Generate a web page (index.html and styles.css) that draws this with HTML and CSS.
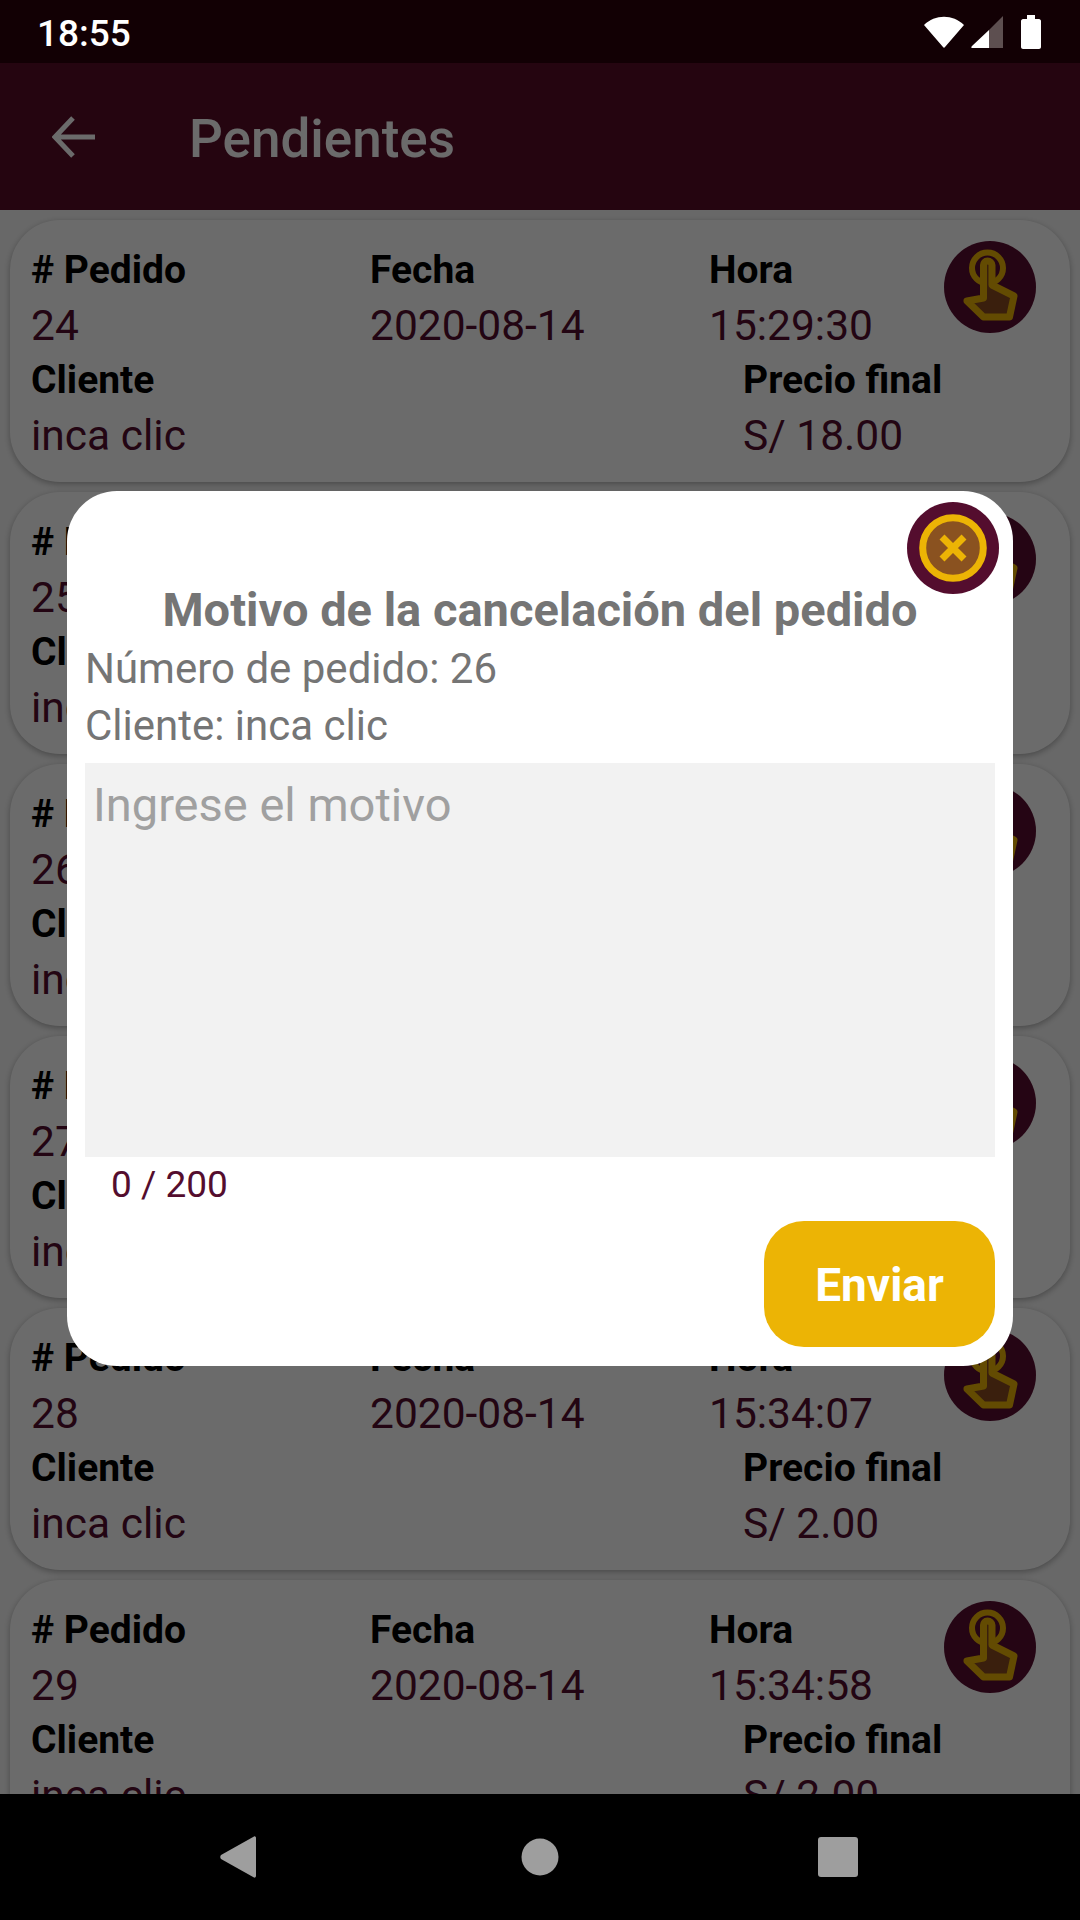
FILE: index.html
```html
<!DOCTYPE html>
<html>
<head>
  <title>Pendientes</title>
  <link rel="stylesheet" href="styles.css">
</head>
<body>
  <svg class="defs" width="0" height="0">
    <symbol id="tap" viewBox="0 0 92 92">
      <circle cx="46" cy="46" r="46" fill="#5a0d30"/>
      <circle cx="43.5" cy="27" r="15.5" fill="none" stroke="#ecb405" stroke-width="6"/>
      <path d="M43.500 20 C41 20 39.500 22 39.500 24 L39.500 57 L23 60 L39.500 76 L65.500 76 L70 55 L48 44 L48 24 C48 22 46 20 43.500 20 Z" fill="#8a4a20" stroke="#ecb405" stroke-width="7" stroke-linejoin="round"/>
    </symbol>
  </svg>

  <div class="screen">
    <div class="status-bar">
      <span class="time">18:55</span>
      <div class="status-icons">
        <svg class="wifi" width="40" height="32" viewBox="0 0 40 32"><path d="M0 9 C11 -2 29 -2 40 9 L21 31 C20.500 32 19.500 32 19 31 Z" fill="#fff"/></svg>
        <svg class="signal" width="32" height="32" viewBox="0 0 32 32">
          <path d="M32 0 V32 H18 V14 Z" fill="#5d4f50"/>
          <path d="M18 14 V32 H1 C0 32 0 31 1 30 Z" fill="#fff"/>
        </svg>
        <svg class="battery" width="20" height="34" viewBox="0 0 20 34"><path d="M6 0 H14 V4 H18 C19 4 20 5 20 6 V32 C20 33 19 34 18 34 H2 C1 34 0 33 0 32 V6 C0 5 1 4 2 4 H6 Z" fill="#fff"/></svg>
      </div>
    </div>

    <div class="app">
      <header class="toolbar">
        <svg class="back" width="44" height="42" viewBox="0 0 44 42"><path d="M43 21 H3 M21 2 L3 21 L21 40" fill="none" stroke="#fff" stroke-width="5"/></svg>
        <h1>Pendientes</h1>
      </header>

      <main class="list">
        <article class="card">
          <div class="cell"><b># Pedido</b><span>24</span></div>
          <div class="cell"><b>Fecha</b><span>2020-08-14</span></div>
          <div class="cell"><b>Hora</b><span>15:29:30</span></div>
          <svg class="tap"><use href="#tap"/></svg>
          <div class="cell wide"><b>Cliente</b><span>inca clic</span></div>
          <div class="cell price"><b>Precio final</b><span>S/ 18.00</span></div>
        </article>
        <article class="card">
          <div class="cell"><b># Pedido</b><span>25</span></div>
          <div class="cell"><b>Fecha</b><span>2020-08-14</span></div>
          <div class="cell"><b>Hora</b><span>15:30:12</span></div>
          <svg class="tap"><use href="#tap"/></svg>
          <div class="cell wide"><b>Cliente</b><span>inca clic</span></div>
          <div class="cell price"><b>Precio final</b><span>S/ 2.00</span></div>
        </article>
        <article class="card">
          <div class="cell"><b># Pedido</b><span>26</span></div>
          <div class="cell"><b>Fecha</b><span>2020-08-14</span></div>
          <div class="cell"><b>Hora</b><span>15:31:40</span></div>
          <svg class="tap"><use href="#tap"/></svg>
          <div class="cell wide"><b>Cliente</b><span>inca clic</span></div>
          <div class="cell price"><b>Precio final</b><span>S/ 2.00</span></div>
        </article>
        <article class="card">
          <div class="cell"><b># Pedido</b><span>27</span></div>
          <div class="cell"><b>Fecha</b><span>2020-08-14</span></div>
          <div class="cell"><b>Hora</b><span>15:33:05</span></div>
          <svg class="tap"><use href="#tap"/></svg>
          <div class="cell wide"><b>Cliente</b><span>inca clic</span></div>
          <div class="cell price"><b>Precio final</b><span>S/ 2.00</span></div>
        </article>
        <article class="card">
          <div class="cell"><b># Pedido</b><span>28</span></div>
          <div class="cell"><b>Fecha</b><span>2020-08-14</span></div>
          <div class="cell"><b>Hora</b><span>15:34:07</span></div>
          <svg class="tap"><use href="#tap"/></svg>
          <div class="cell wide"><b>Cliente</b><span>inca clic</span></div>
          <div class="cell price"><b>Precio final</b><span>S/ 2.00</span></div>
        </article>
        <article class="card">
          <div class="cell"><b># Pedido</b><span>29</span></div>
          <div class="cell"><b>Fecha</b><span>2020-08-14</span></div>
          <div class="cell"><b>Hora</b><span>15:34:58</span></div>
          <svg class="tap"><use href="#tap"/></svg>
          <div class="cell wide"><b>Cliente</b><span>inca clic</span></div>
          <div class="cell price"><b>Precio final</b><span>S/ 2.00</span></div>
        </article>
      </main>

      <div class="overlay">
        <section class="modal">
          <button class="close" type="button" aria-label="Cerrar">
            <svg width="92" height="92" viewBox="0 0 92 92">
              <circle cx="46" cy="46" r="46" fill="#540d2e"/>
              <circle cx="46" cy="46" r="30.300" fill="#8a5220" stroke="#ecb405" stroke-width="7"/>
              <path d="M35 35 L57 57 M57 35 L35 57" stroke="#ecb405" stroke-width="7"/>
            </svg>
          </button>
          <h2>Motivo de la cancelación del pedido</h2>
          <p class="info">Número de pedido: 26</p>
          <p class="info">Cliente: inca clic</p>
          <div class="motivo">Ingrese el motivo</div>
          <p class="counter">0 / 200</p>
          <div class="actions">
            <button class="send" type="button">Enviar</button>
          </div>
        </section>
      </div>
    </div>

    <nav class="nav-bar">
      <svg width="36" height="42" viewBox="0 0 36 42"><path d="M34 0.500 C35 0 36 1 36 2 V40 C36 41 35 42 34 41.500 L1 23 C0 22 0 20 1 19 Z" fill="#9e9e9e"/></svg>
      <svg class="home" width="38" height="38" viewBox="0 0 38 38"><circle cx="19" cy="19" r="18.500" fill="#9e9e9e"/></svg>
      <svg width="40" height="40" viewBox="0 0 40 40"><rect width="40" height="40" rx="3" fill="#9e9e9e"/></svg>
    </nav>
  </div>
</body>
</html>
```

FILE: styles.css
```css
* {
  margin: 0;
  padding: 0;
  box-sizing: border-box;
}

body {
  font-family: 'Roboto', sans-serif;
  background: #000;
}

.defs {
  position: absolute;
}

.screen {
  width: 1080px;
  height: 1920px;
  display: flex;
  flex-direction: column;
  overflow: hidden;
}

.status-bar {
  height: 63px;
  flex: none;
  display: flex;
  align-items: center;
  justify-content: space-between;
  padding: 0 39px 0 37px;
  background: #120004;
  color: #fff;
}

.time {
  padding-top: 3px;
  font-size: 37px;
  font-weight: 500;
}

.status-icons {
  display: flex;
  align-items: center;
  gap: 7px;
}

.battery {
  margin-left: 11px;
}

.app {
  position: relative;
  flex: 1;
  min-height: 0;
  display: flex;
  flex-direction: column;
  background: #f8f8f8;
  overflow: hidden;
}

.toolbar {
  height: 147px;
  flex: none;
  display: flex;
  align-items: center;
  padding-left: 52px;
  background: #5a0d28;
  color: #fff;
}

.toolbar h1 {
  margin-left: 93px;
  padding-top: 4px;
  font-size: 53px;
  font-weight: 500;
}

.list {
  flex: 1;
  min-height: 0;
  padding: 10px 10px 0;
  display: flex;
  flex-direction: column;
  gap: 10px;
}

.card {
  height: 262px;
  flex: none;
  display: grid;
  grid-template-columns: 339px 339px 234px 92px;
  grid-template-rows: 110px 110px;
  padding: 23px 0 19px 21px;
  background: #fff;
  border-radius: 50px;
  box-shadow: 0 2px 6px rgba(0, 0, 0, 0.3);
  color: #540d2e;
}

.cell {
  display: flex;
  flex-direction: column;
  font-size: 42.5px;
  line-height: 55px;
}

.cell b {
  font-size: 39px;
  font-weight: 700;
  color: #000;
}

.cell.wide {
  grid-column: 1 / 3;
}

.cell.price {
  grid-column: 3 / 5;
  margin-left: 34px;
}

.tap {
  width: 92px;
  height: 92px;
  margin-left: 1px;
  margin-top: -2px;
}

.overlay {
  position: absolute;
  top: 0;
  left: 0;
  right: 0;
  bottom: 0;
  display: flex;
  align-items: center;
  justify-content: center;
  background: rgba(0, 0, 0, 0.58);
}

.modal {
  position: relative;
  width: 946px;
  height: 875px;
  padding: 89px 18px 0;
  background: #fff;
  border-radius: 50px;
}

.close {
  position: absolute;
  top: 11px;
  right: 14px;
  width: 92px;
  height: 92px;
  border: none;
  background: none;
}

.modal h2 {
  font-size: 47px;
  line-height: 60px;
  font-weight: 700;
  text-align: center;
  color: #757575;
}

.info {
  font-size: 42px;
  line-height: 57px;
  color: #757575;
}

.motivo {
  height: 394px;
  margin-top: 9px;
  padding: 14px 8px;
  background: #f2f2f2;
  font-size: 47px;
  line-height: 55px;
  color: #a0a0a0;
}

.counter {
  margin-top: 6px;
  padding-left: 26px;
  font-size: 37px;
  line-height: 44px;
  color: #540d2e;
}

.actions {
  display: flex;
  justify-content: flex-end;
  margin-top: 14px;
}

.send {
  width: 231px;
  height: 126px;
  padding-top: 2px;
  border: none;
  border-radius: 40px;
  background: #ecb405;
  color: #fff;
  font-family: inherit;
  font-size: 46px;
  font-weight: 700;
}

.nav-bar {
  height: 126px;
  flex: none;
  display: flex;
  align-items: center;
  background: #000;
  padding-left: 220px;
  gap: 259px;
}

.home {
  margin-left: 6px;
}
```
